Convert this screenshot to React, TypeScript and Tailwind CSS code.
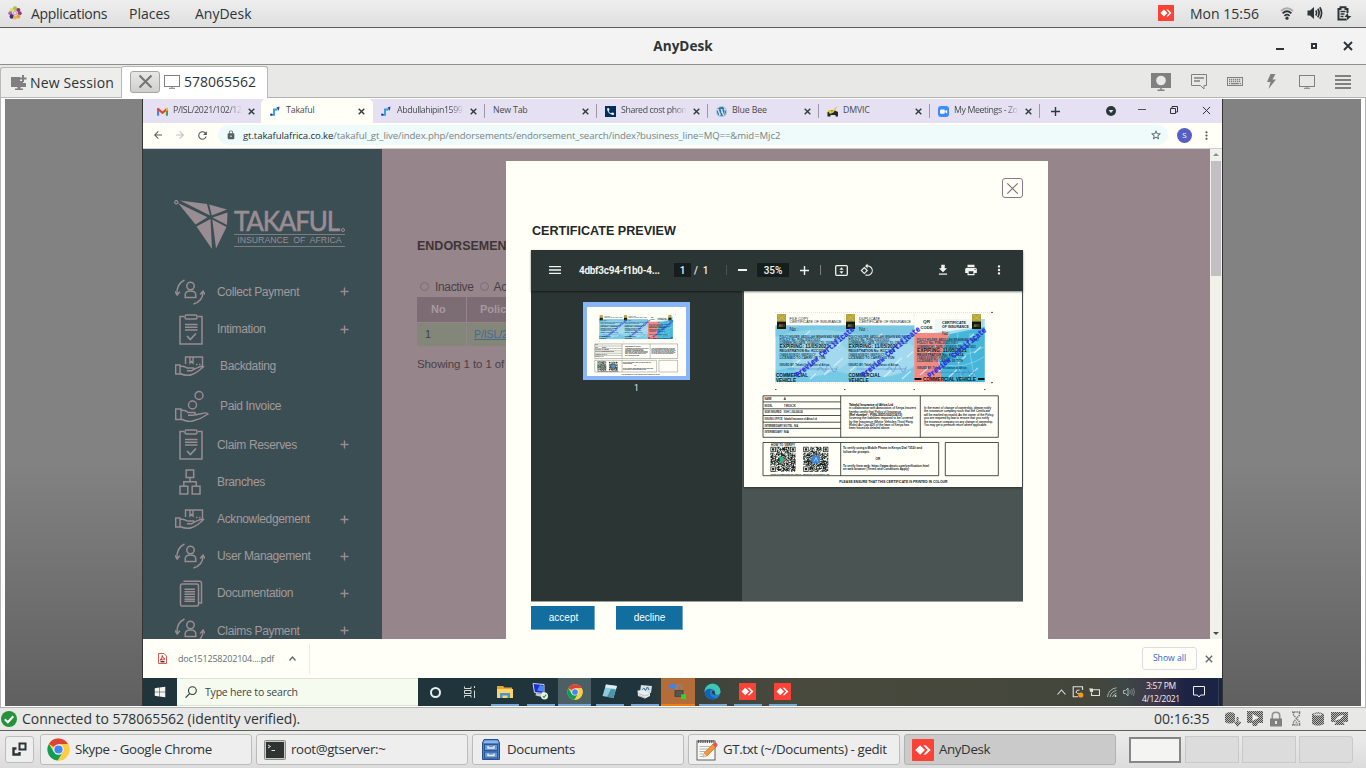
import React from "react";
import {
  MdArrowBack,
  MdArrowForward,
  MdRefresh,
  MdLock,
  MdStarBorder,
  MdMoreVert,
  MdMenu,
  MdFileDownload,
  MdPrint,
  MdRotate90DegreesCcw,
  MdPhone,
} from "react-icons/md";
import { FaWordpress, FaWindows } from "react-icons/fa";

const SYS = "font-['Open_Sans','Noto_Sans',sans-serif]";
const ARIAL = "font-['Liberation_Sans',Arial,sans-serif]";

type SvgProps = { w: number; h: number; box?: string; className?: string; children: React.ReactNode };
function Svg({ w, h, box, className, children }: SvgProps) {
  return (
    <svg width={w} height={h} viewBox={box ?? `0 0 ${w} ${h}`} className={`shrink-0 ${className ?? ""}`} fill="none">
      {children}
    </svg>
  );
}

function Cross({ size, stroke, sw = 1 }: { size: number; stroke: string; sw?: number }) {
  return (
    <Svg w={size} h={size} box="0 0 10 10">
      <path d="M1 1L9 9M9 1L1 9" stroke={stroke} strokeWidth={(sw * 10) / size} />
    </Svg>
  );
}

function AnyDeskLogo({ size }: { size: number }) {
  return (
    <Svg w={size} h={size} box="0 0 16 16">
      <rect width="16" height="16" rx="0.5" fill="#fb4236" />
      <path d="M2.4 8L5.9 4.5L9.4 8L5.9 11.5Z" fill="#fff" />
      <path d="M8.2 4.5H9.9L13.6 8L9.9 11.5H8.2L11.4 8Z" fill="#fff" />
    </Svg>
  );
}

function ChromeLogo({ size }: { size: number }) {
  return (
    <Svg w={size} h={size} box="0 0 24 24">
      <circle cx="12" cy="12" r="11.5" fill="#ffcd40" />
      <path d="M12 12L2 6.2A11.5 11.5 0 0 1 22 6.5H12Z" fill="#db4437" />
      <path d="M2 6.2A11.5 11.5 0 0 0 11.2 23.5L17 14.5L12 12L7.2 14.8Z" fill="#0f9d58" />
      <path d="M12 6.5H22A11.5 11.5 0 0 1 11.2 23.5L16.8 14.6Z" fill="#ffcd40" />
      <circle cx="12" cy="12" r="5.4" fill="#f6f6f6" />
      <circle cx="12" cy="12" r="4.3" fill="#4285f4" />
    </Svg>
  );
}

/* ---------- GNOME top panel ---------- */

function TopPanel() {
  return (
    <header className="flex h-7 shrink-0 items-center border-b border-[#5c5c5c] bg-linear-to-b from-[#eeeeee] to-[#dfdfdf] pb-px text-[14px] text-[#2e3436]">
      <Svg w={14} h={14} box="0 0 14 14" className="ml-2">
        <circle cx="7" cy="2.5" r="2.2" fill="#a4c83c" />
        <circle cx="3.6" cy="4" r="2" fill="#d9de6a" />
        <circle cx="10.4" cy="4" r="2" fill="#9b2d83" />
        <circle cx="2.3" cy="7.2" r="2" fill="#c25fa8" />
        <circle cx="11.7" cy="7.2" r="2" fill="#8a3a8d" />
        <circle cx="3.8" cy="10.5" r="2.2" fill="#3d2f86" />
        <circle cx="10.3" cy="10.4" r="2.1" fill="#e8a13a" />
        <circle cx="7" cy="11.6" r="2" fill="#f0b540" />
        <circle cx="7" cy="7" r="2.2" fill="#d9a0b8" />
        <circle cx="7" cy="7" r="1" fill="#f3e9ef" />
      </Svg>
      <span className="ml-[9px] w-[98px] tracking-[-0.3px]">Applications</span>
      <span className="w-[66px]">Places</span>
      <span>AnyDesk</span>
      <div className="ml-auto flex items-center pr-[14px]">
        <AnyDeskLogo size={16} />
        <span className="ml-4 w-[90px]">Mon 15:56</span>
        <Svg w={14} h={13} className="mr-[13px]">
          <path d="M1 4Q7-1.5 13 4" stroke="#a9acac" strokeWidth="1.8" />
          <path d="M2.6 6.4Q7 2.2 11.4 6.4" stroke="#2e3436" strokeWidth="1.8" />
          <path d="M4.4 8.8Q7 6.4 9.6 8.8" stroke="#2e3436" strokeWidth="1.6" />
          <circle cx="7" cy="11.2" r="1.6" fill="#2e3436" />
        </Svg>
        <Svg w={16} h={14} className="mr-[14px]">
          <path d="M0.5 4.5H3L7 1V13L3 9.5H0.5Z" fill="#2e3436" />
          <path d="M8.8 4.5Q10.4 7 8.8 9.5M10.8 2.8Q13.4 7 10.8 11.2M12.8 1.2Q16.4 7 12.8 12.8" stroke="#2e3436" strokeWidth="1.7" />
        </Svg>
        <Svg w={15} h={15}>
          <path d="M9 13.6H1.5V3H3.5V1.2H8.5V3H10.5V7" stroke="#2e3436" strokeWidth="2" />
          <path d="M3.5 5.5H8.5M3.5 8H7.5M3.5 10.5H6.5" stroke="#2e3436" strokeWidth="1.4" />
          <path d="M10.5 7L7.5 11H10L9 15L14.5 10H11.5Z" fill="#2e3436" />
        </Svg>
      </div>
    </header>
  );
}

function TitleBar() {
  return (
    <div className="grid h-[37px] shrink-0 grid-cols-[1fr_auto_1fr] items-center border-b border-[#8f8f8c] bg-[#f3f3f3]">
      <span />
      <h1 className="pt-px text-[13.6px] font-bold text-[#2e3436]">AnyDesk</h1>
      <div className="flex items-center justify-end pr-[13px]">
        <span className="mt-[5px] mr-[27px] h-[2px] w-2 bg-[#2e3436]" />
        <span className="mr-[26px] h-[6px] w-[6px] border-2 border-[#2e3436]" />
        <Cross size={10} stroke="#2e3436" sw={2} />
      </div>
    </div>
  );
}

function SessionTabs() {
  return (
    <div className="flex h-[33px] shrink-0 items-end bg-[#e8e8e6] shadow-[inset_0_-1px_0_#b4b4b2]">
      <div className="flex h-[31px] w-[121px] items-center rounded-tl-[3px] border border-r-0 border-[#b8b8b6] bg-[#ededeb] pl-[10px] text-[14px] text-[#2e3436]">
        <Svg w={17} h={16}>
          <path d="M0 2H9V6H12V8H15V12H9.5V13.5H12V15H4V13.5H6.5V12H0Z" fill="#808080" />
          <path d="M12 0V7M8.7 3.5H15.5" stroke="#808080" strokeWidth="2" />
        </Svg>
        <span className="ml-[2px] tracking-[0.15px] whitespace-nowrap">New Session</span>
      </div>
      <div className="flex h-[32px] w-[147px] items-center rounded-t-[3px] border border-b-0 border-[#b8b8b6] bg-white pb-[2px] text-[14px] text-[#2e3436]">
        <span className="ml-[8px] flex h-[22px] w-[30px] items-center justify-center rounded-[3px] border border-[#a5a5a3] bg-linear-to-b from-[#e8e8e6] to-[#cfcfcd]">
          <Cross size={15} stroke="#747474" sw={2} />
        </span>
        <Svg w={16} h={14} className="ml-1">
          <rect x="0.5" y="0.5" width="15" height="11" stroke="#808080" />
          <path d="M8 11V13M5 13.3H11" stroke="#808080" />
        </Svg>
        <span className="ml-1">578065562</span>
      </div>
      <div className="ml-auto flex h-full items-center pr-[15px]">
        <Svg w={20} h={18} className="mr-5">
          <path d="M0 0H20V15H0Z" fill="#808080" />
          <circle cx="10" cy="7.5" r="4.8" fill="#e8e8e6" />
          <path d="M10 15V17M6.5 17.3H13.5" stroke="#808080" strokeWidth="1.4" />
        </Svg>
        <Svg w={16} h={16} className="mr-5">
          <path d="M0.5 0.5H15.5V11.5H13V15L9.5 11.5H0.5Z" stroke="#808080" />
          <path d="M3 4H13M3 7H9" stroke="#808080" strokeWidth="1.4" />
        </Svg>
        <Svg w={16} h={9} className="mr-[24px]">
          <rect x="0.5" y="0.5" width="15" height="8" stroke="#808080" />
          <path d="M2 2.5H14M2 4.5H14" stroke="#808080" strokeWidth="1.3" strokeDasharray="1.3 .7" />
          <path d="M2 6.7H14" stroke="#808080" strokeWidth="1.3" strokeDasharray="1.3 .7 8 .7" />
        </Svg>
        <Svg w={9} h={15} className="mr-[23px]">
          <path d="M3.5 0L0 8H3.5L1.5 15L9 5.5H5.5L8.5 0Z" fill="#808080" />
        </Svg>
        <Svg w={16} h={14} className="mr-5">
          <rect x="0.5" y="0.5" width="15" height="11" stroke="#808080" />
          <path d="M8 11V13M5 13.3H11" stroke="#808080" />
        </Svg>
        <Svg w={16} h={14}>
          <path d="M0 1H16M0 5H16M0 9H16M0 13H16" stroke="#808080" strokeWidth="2" />
        </Svg>
      </div>
    </div>
  );
}

/* ---------- Remote browser ---------- */

function GmailIcon() {
  return (
    <Svg w={11} h={9} box="0 0 22 17">
      <path d="M2 17V2" stroke="#4285f4" strokeWidth="4.5" />
      <path d="M20 17V2" stroke="#34a853" strokeWidth="4.5" />
      <path d="M1 2.5L11 11L21 2.5" stroke="#ea4335" strokeWidth="4.5" />
      <path d="M18 5V1.5L22 1V6L18 8Z" fill="#fbbc04" />
    </Svg>
  );
}

function StepIcon() {
  return (
    <Svg w={10} h={10}>
      <path d="M0.5 8.8H4V3.5H7.5" stroke="#2e9ad6" strokeWidth="1.8" />
      <circle cx="1.3" cy="8.6" r="1.2" fill="#2a39c9" />
      <path d="M6.5 1.5L9.5 0.5L8.8 4.8Z" fill="#2a39c9" />
    </Svg>
  );
}

function CarIcon() {
  return (
    <Svg w={12} h={11}>
      <path d="M0.5 6L3 4.5L8 4.5L11 6V10.5H8.5V9H3.5V10.5H0.5Z" fill="#20262c" />
      <path d="M0.5 4.5L3.5 4L5 5.5L8.5 1.5L11 0L6.5 6.5L3 8Z" fill="#d9cf2c" />
    </Svg>
  );
}

const tabs = [
  { w: "w-[112px]", icon: <GmailIcon />, title: "P/ISL/2021/102/12", fade: true },
  { w: "w-[112px]", icon: <StepIcon />, title: "Takaful", active: true },
  { w: "w-[112px]", icon: <StepIcon />, title: "Abdullahipin1599", fade: true, sep: true },
  { w: "w-[112px]", icon: null, title: "New Tab", sep: true },
  {
    w: "w-[111px]",
    icon: (
      <span className="flex h-[11px] w-[11px] items-center justify-center bg-[#042e5e]">
        <MdPhone size={9} color="#fff" />
      </span>
    ),
    title: "Shared cost phon",
    fade: true,
    sep: true,
  },
  { w: "w-[111px]", icon: <FaWordpress size={11} color="#1f7ba0" />, title: "Blue Bee", sep: true },
  { w: "w-[111px]", icon: <CarIcon />, title: "DMVIC", sep: true },
  {
    w: "w-[110px]",
    icon: (
      <Svg w={11} h={11}>
        <rect width="11" height="11" rx="3" fill="#3d8bfd" />
        <rect x="2" y="3.5" width="4.8" height="4.2" rx="1" fill="#fff" />
        <path d="M7.2 5L9.2 3.8V7.4L7.2 6.2Z" fill="#fff" />
      </Svg>
    ),
    title: "My Meetings - Zo",
    fade: true,
    sep: true,
  },
];

function TabStrip() {
  return (
    <div className="flex h-[24px] shrink-0 items-stretch bg-[#e6e1f2] pl-[6px] text-[8.8px] tracking-[-0.02em] text-[#454b4d]">
      {tabs.map((t) => (
        <div
          key={t.title}
          className={`flex items-center ${t.w} ${t.active ? "rounded-t-[5px] bg-[#fffff8] pl-[9px]" : "pl-2"}`}
        >
          {t.icon && <span className="mr-[5px] flex w-[11px] shrink-0">{t.icon}</span>}
          <span
            className={`flex-1 whitespace-nowrap ${
              t.fade ? "tracking-[-0.045em] [mask-image:linear-gradient(to_right,#000_80%,transparent)]" : ""
            }`}
          >
            {t.title}
          </span>
          <span className="mr-[7px] ml-[6px] flex">
            <Cross size={7} stroke="#2f3a3c" sw={1.4} />
          </span>
          <span className={`h-[14px] w-px ${t.sep ? "bg-[#9d99aa]" : ""}`} />
        </div>
      ))}
      <div className="flex flex-1 items-center">
        <Svg w={9} h={9} className="ml-[11px]">
          <path d="M4.5 0V9M0 4.5H9" stroke="#27393a" strokeWidth="1.4" />
        </Svg>
        <Svg w={10} h={10} className="ml-[46px]">
          <circle cx="5" cy="5" r="5" fill="#263a38" />
          <path d="M2.6 4H7.4L5 7Z" fill="#e6e1f2" />
        </Svg>
        <span className="mt-[-4px] ml-[22px] h-px w-2 bg-[#555]" />
        <Svg w={8} h={8} className="mt-[-2px] ml-[24px]">
          <path d="M0.5 2.5H5.5V7.5H0.5ZM2 2V0.5H7.5V6H6" stroke="#333" />
        </Svg>
        <span className="mt-[-2px] ml-[24px] flex">
          <Cross size={9} stroke="#333" sw={1} />
        </span>
      </div>
    </div>
  );
}

function AddressBar() {
  return (
    <div className="flex h-[26px] shrink-0 items-center border-b border-[#cfcbd8] bg-[#fffff8] pb-px">
      <MdArrowBack size={12} color="#4f5a5a" className="ml-[9px]" />
      <MdArrowForward size={12} color="#b9bfbd" className="ml-[10px]" />
      <MdRefresh size={13} color="#4f5a5a" className="ml-[10px]" />
      <div className="ml-[9px] flex h-[20px] w-[950px] items-center rounded-full bg-[#effafa] pl-2">
        <MdLock size={10} color="#566060" />
        <span className="mt-[2px] ml-[7px] text-[9.6px] tracking-[-0.01em] text-[#7b8283]">
          <span className="text-[#263032]">gt.takafulafrica.co.ke</span>
          /takaful_gt_live/index.php/endorsements/endorsement_search/index?business_line=MQ==&amp;mid=Mjc2
        </span>
        <MdStarBorder size={12} color="#4f5a5a" className="mr-[6px] ml-auto" />
      </div>
      <span className="ml-[9px] flex h-[15px] w-[15px] items-center justify-center rounded-full bg-[#5560c4] text-[8px] text-white">
        S
      </span>
      <MdMoreVert size={13} color="#4f5a5a" className="ml-[8px]" />
    </div>
  );
}

/* ---------- Sidebar ---------- */

const LINE = "#998c93";

function UserCycle() {
  return (
    <Svg w={30} h={26} className="ml-px">
      <g stroke={LINE} strokeWidth="1.5">
        <circle cx="15.5" cy="7" r="3.7" />
        <path d="M10.2 18.5V16Q10.2 12 15.5 12Q20.8 12 20.8 16V18.5Z" />
        <path d="M9.5 1Q1.5 5 2 15M18.5 25Q28 22 28 13" />
        <path d="M0 12.5L2.2 16L4.8 12.8M25.3 15.5L28 12L30 15.5" />
      </g>
    </Svg>
  );
}

function Clipboard() {
  return (
    <Svg w={24} h={31} className="ml-[5px]">
      <g stroke={LINE} strokeWidth="1.5">
        <path d="M5 2.5H1V30H23V2.5H19" />
        <rect x="6" y="1" width="12" height="4" rx="1.5" />
        <path d="M6 10.5H18.5M6 13.3H18.5M6 16H18.5" strokeWidth="1.6" />
        <path d="M8 22L11.3 25.5L17 19.5" strokeWidth="1.8" />
      </g>
    </Svg>
  );
}

function BoxHand() {
  return (
    <Svg w={30} h={20} className="ml-px">
      <g stroke={LINE} strokeWidth="1.4">
        <path d="M10.5 8V1H27.5V12" />
        <path d="M15 1V7L16.5 5.5L18 7V1M21 8.5H22.5M24 8.5H25.5" />
        <path d="M0.7 9H5V18H0.7ZM5 10.5Q9 9.5 12 12H18.5Q19 14.5 16.5 14.7H12M5 17.5Q12 20.5 17 18.5Q22 17 28.5 10.5Q26 9.5 22 12L18.5 13.5" />
      </g>
    </Svg>
  );
}

function CoinHand() {
  return (
    <Svg w={34} h={32} className="ml-px mr-[-4px]">
      <g stroke={LINE} strokeWidth="1.4">
        <circle cx="24" cy="5.5" r="4" />
        <circle cx="17.5" cy="15" r="4" />
        <path d="M0.7 19H6V29.5H0.7ZM6 20.5Q10 19.5 13 22.5H20Q21 25 18 25.3H13M6 29Q14 33 19 30.5Q26 29 33 24Q31 22 27 23.5L20 25" />
      </g>
    </Svg>
  );
}

function OrgChart() {
  return (
    <Svg w={22} h={26} className="ml-[5px]">
      <g stroke={LINE} strokeWidth="1.5">
        <rect x="7.2" y="1" width="7.5" height="7.5" />
        <rect x="1" y="17.2" width="7.8" height="7.8" />
        <rect x="13.2" y="17.2" width="7.8" height="7.8" />
        <path d="M11 8.5V12.5M4.8 17V12.8H17.2V17" />
      </g>
    </Svg>
  );
}

function Docs() {
  return (
    <Svg w={24} h={27} className="ml-[5px]">
      <g stroke={LINE} strokeWidth="1.5">
        <rect x="1.5" y="4" width="18" height="22" rx="1.5" />
        <path d="M4.5 1.2H21Q22.5 1.2 22.5 3V23H20" />
        <path d="M5.5 9.2H16M5.5 11.7H16M5.5 14.2H16M5.5 16.7H16M5.5 19.2H16M5.5 21.3H16" strokeWidth="1.4" />
      </g>
    </Svg>
  );
}

const menu = [
  { label: "Collect Payment", icon: <UserCycle />, plus: true },
  { label: "Intimation", icon: <Clipboard />, plus: true },
  { label: "Backdating", icon: <BoxHand />, indent: true },
  { label: "Paid Invoice", icon: <CoinHand />, indent: true, gap: true },
  { label: "Claim Reserves", icon: <Clipboard />, plus: true, gap: true },
  { label: "Branches", icon: <OrgChart /> },
  { label: "Acknowledgement", icon: <BoxHand />, plus: true },
  { label: "User Management", icon: <UserCycle />, plus: true },
  { label: "Documentation", icon: <Docs />, plus: true },
  { label: "Claims Payment", icon: <UserCycle />, plus: true },
];

function Sidebar() {
  return (
    <aside className="h-full w-[239px] shrink-0 overflow-hidden bg-[#3b4e53] pt-[51px] pl-[31px]">
      <div className="flex h-[73.4px] items-start">
        <Svg w={54} h={50}>
          <g fill={LINE}>
            <path d="M6 0.5L33 4L36 15.5ZM4 3L33.5 17.2L21.5 24.5ZM35.2 4.5L53 9.5L37.8 15.5ZM38.5 17.5L53.5 12.5L53 25ZM22.5 26.5L36.5 19L38 49ZM38.3 19.5L52.5 27L42 48.5Z" />
          </g>
          <circle cx="2.3" cy="2.3" r="1.6" stroke={LINE} strokeWidth="1.2" />
        </Svg>
        <div className="mt-[9px] ml-[6px] flex w-[114px] flex-col text-[#998c93]">
          <span className="flex h-[24px] items-center text-[26px] tracking-[-0.045em] font-['Lato',sans-serif] [-webkit-text-stroke:0.6px_#998c93]">
            TAKAFUL
            <span className="mt-[17px] ml-[2px] h-1 w-1 shrink-0 rounded-full border border-[#998c93]" />
          </span>
          <span className={`mt-px flex h-[13px] w-[111px] items-center justify-center border-y border-[#7f7b83] text-[8.7px] whitespace-nowrap ${ARIAL}`}>
            INSURANCE&nbsp; OF&nbsp; AFRICA
          </span>
        </div>
      </div>
      <nav className={`flex flex-col text-[12px] tracking-[-0.35px] text-[#a39a9c] ${ARIAL}`}>
        {menu.map((m) => (
          <div key={m.label} className={`flex h-[37.2px] shrink-0 items-center ${m.gap ? "mt-[2px]" : ""}`}>
            <span className="flex w-[43px] shrink-0">{m.icon}</span>
            <span className={`w-[121px] ${m.indent ? "pl-[3px]" : ""}`}>{m.label}</span>
            {m.plus && (
              <Svg w={9} h={9} className="ml-[2px]">
                <path d="M4.5 0.5V8.5M0.5 4.5H8.5" stroke={LINE} strokeWidth="1.4" />
              </Svg>
            )}
          </div>
        ))}
      </nav>
    </aside>
  );
}

function PageBody() {
  return (
    <main className={`h-full flex-1 bg-[#96868c] pt-[89px] pl-[35px] text-[12px] text-[#4a4044] ${ARIAL}`}>
      <h2 className="h-[17px] text-[12.5px] leading-[17px] font-bold whitespace-nowrap text-[#3e3438]">ENDORSEMENTS SEARCH</h2>
      <div className="mt-[23px] flex h-[17px] items-center tracking-[-0.35px]">
        <span className="ml-[3px] h-[9px] w-[9px] rounded-full border border-[#7b6d73]" />
        <span className="ml-[6px]">Inactive</span>
        <span className="ml-[6px] h-[9px] w-[9px] rounded-full border border-[#7b6d73]" />
        <span className="ml-[5px]">Active</span>
      </div>
      <div className="mt-[2px] flex h-[25px] w-[400px] items-center gap-px">
        <span className="flex h-full w-[49px] items-center bg-[#7c6c73] pl-[14px] text-[11px] font-bold text-[#a8999f]">No</span>
        <span className="flex h-full flex-1 items-center bg-[#7c6c73] pl-[13px] text-[11px] font-bold text-[#a8999f]">Policy No</span>
      </div>
      <div className="mt-[1px] flex h-[23px] w-[400px] items-center gap-px">
        <span className="flex h-full w-[49px] items-center bg-[#83877a] pl-[8px] text-[11px]">1</span>
        <span className="flex h-full flex-1 items-center bg-[#83877a] pl-[7px] text-[10.5px] tracking-[-0.1px] text-[#46678f] underline">P/ISL/2021/102/12</span>
      </div>
      <p className="mt-[10px] text-[11.5px] tracking-[-0.1px]">Showing 1 to 1 of 1 entries</p>
    </main>
  );
}

/* ---------- Certificate document ---------- */

function Txt(props: React.SVGProps<SVGTextElement>) {
  return <text lengthAdjust="spacingAndGlyphs" {...props} />;
}

function Qr({ x, y, size, seed }: { x: number; y: number; size: number; seed: number }) {
  const n = 33;
  const c = size / n;
  let s = seed;
  let d = "";
  for (let j = 0; j < n; j++) {
    for (let i = 0; i < n; i++) {
      s ^= s << 13;
      s ^= s >>> 17;
      s ^= s << 5;
      const corner = (i < 8 && j < 8) || (i > 24 && j < 8) || (i < 8 && j > 24);
      if (!corner && (s >>> 0) / 4294967296 > 0.4) d += `M${x + i * c} ${y + j * c}h${c}v${c}h${-c}z`;
    }
  }
  const eyes = [
    [0, 0],
    [26, 0],
    [0, 26],
  ];
  return (
    <g>
      <path d={d} fill="#16201d" />
      {eyes.map(([i, j]) => (
        <g key={`${i}-${j}`}>
          <rect x={x + (i + 0.5) * c} y={y + (j + 0.5) * c} width={6 * c} height={6 * c} fill="none" stroke="#16201d" strokeWidth={c} />
          <rect x={x + (i + 2) * c} y={y + (j + 2) * c} width={3 * c} height={3 * c} fill="#16201d" />
        </g>
      ))}
    </g>
  );
}

function Aki({ x }: { x: number }) {
  return (
    <g>
      <rect x={x} y="23" width="9" height="7.5" fill="#b5a437" />
      <path d={`M${x + 1} 24l7 5.5M${x + 8} 24l-7 5.5`} stroke="#d8cc78" strokeWidth=".6" />
      <rect x={x} y="30.5" width="9" height="7.5" fill="#15180f" />
      <Txt x={x + 1.4} y="36" fontSize="4" fill="#a89a45" textLength="6.2">AKI</Txt>
    </g>
  );
}

function Fields({ x, y, w }: { x: number; y: number; w: number }) {
  return (
    <g fill="#10405a" fontSize="2.8" fontWeight="bold">
      <Txt x={x} y={y} textLength={w}>POLICY HOLDER: ABDULLAHI IBRAHIM AND FAMILY</Txt>
      <Txt x={x} y={y + 3} textLength={w * 0.66}>POLICY No: P/ISL/2021/102/1</Txt>
      <Txt x={x} y={y + 6.6} textLength={w * 0.95}>COMMENCING DATE: 12/04/2021 TO: 11/05/2021</Txt>
      <Txt x={x} y={y + 10.9} fontSize="4.7" fill="#0a1822" textLength={w * 0.8}>EXPIRING: 11/05/2021</Txt>
      <Txt x={x} y={y + 14.7} fontSize="3.5" fill="#0c2836" textLength={w * 0.75}>REGISTRATION No: KCC123A</Txt>
      <Txt x={x} y={y + 18} textLength={w * 0.58}>CHASIS NO/BODY: SEE/POLICY</Txt>
      <Txt x={x} y={y + 21.4} textLength={w * 0.74}>LICENSED TO CARRY: 05 TON</Txt>
      <Txt x={x} y={y + 28.3} textLength={w * 0.8}>ISSUED BY: Takaful Insurance of Africa</Txt>
      <path d={`M${x + 8} ${y + 31.5}h${w * 0.8}M${x + 38} ${y + 33}q3-6 5-1t4-2t5 1t6-2`} stroke="#4a7bc0" strokeWidth=".5" fill="none" />
    </g>
  );
}

const scratches = [
  [34, 88, 7], [40, 60, 9], [48, 76, 8], [57, 48, 9], [66, 88, 6], [72, 70, 8], [80, 84, 8], [90, 75, 9], [93, 55, 6],
  [106, 80, 8], [114, 62, 9], [122, 88, 8], [130, 50, 8], [140, 86, 8], [150, 74, 8], [158, 88, 9], [163, 66, 6],
  [176, 84, 8], [184, 62, 8], [193, 82, 7], [205, 86, 8], [214, 72, 8], [225, 85, 9], [230, 62, 7], [222, 50, 8],
];

function Certificate({ w, h }: { w: number; h: number }) {
  const ink = "#20262a";
  const left = [
    ["NAME", "A", 109.1],
    ["MODEL", "TRUCK", 115.8],
    ["SUM INSURED", "KSH 1,200,000.00", 122.4],
    ["ISSUING OFFICE", "Takaful Insurance of Africa Ltd", 129.1],
    ["INTERMEDIARY NO/TEL", "N/A", 135.6],
    ["INTERMEDIARY", "N/A", 142.2],
  ] as const;
  const leftLen = [7, 8, 17, 18, 28, 18];
  const valueLen = [2, 12, 19, 33, 4, 5];
  const body1 = [
    "Takaful Insurance of Africa Ltd",
    "in collaboration with Association of Kenya Insurers",
    "hereby certify that Policy of Insurance",
    "(Ref number : P/ISL/2021/102/13672)",
    "covering the liabilities required to be covered",
    "by the Insurance (Motor Vehicles Third Party",
    "Risks) Act Cap 405 of the laws of Kenya has",
    "been issued as detailed above.",
  ];
  const len1 = [44, 67, 52, 53, 64, 64, 60, 41];
  const body2 = [
    "In the event of change of ownership, please notify",
    "the insurance company such that the Certificate",
    "will be marked as invalid. As the owner of the Policy,",
    "you are required by law to ensure that you notify",
    "the insurance company on any change of ownership.",
    "You may get a premium return where applicable.",
  ];
  const len2 = [67, 66, 70, 65, 69, 63];
  return (
    <Svg w={w} h={h} box="0 0 278 196" className="block font-['Liberation_Sans',Arial,sans-serif]">
      <rect width="278" height="196" fill="#fffff8" />
      <path d="M31 21.5H248M31 92H248M100.4 21.5V92M170 21.5V92" stroke="#c5c9c4" strokeWidth=".5" strokeDasharray="1 1" />
      <path d="M247 21.4h2M247 91.6h2M31 98.5h1.5M100 98.5h1.5M169.5 98.5h1.5M240 98.5h1.5" stroke="#555" />
      <rect x="31.5" y="34.5" width="138.8" height="56.5" fill="#8ed3ea" />
      <path d="M31.5 34.5H170.3V42Q135 48 100 41T31.5 46Z" fill="#6fc2e0" opacity=".6" />
      <path d="M31.5 80Q60 70 100 82T170.3 76V91H31.5Z" fill="#6cc4e2" opacity=".7" />
      <path d="M46 50Q70 36 95 52T90 80T50 78ZM116 50Q140 36 165 52T160 80T120 78Z" fill="#b2dff2" opacity=".55" />
      <path d="M191 28H240.7V91H170.3V42H190Z" fill="#a6dcf0" />
      <path d="M170.3 42H203L206 47L194 70L200 91H170.3Z" fill="#f08a82" />
      <path d="M206 43L240.7 36V91H200Q190 72 206 43Z" fill="#45b5d8" />
      <path d="M190 22H228V37L190 42Z" fill="#fffff8" opacity=".8" />
      <g stroke="#dff4fb" strokeWidth="1.2" opacity=".8">
        {scratches.map(([x, y, l]) => (
          <path key={`${x}-${y}`} d={`M${x} ${y}l${l} ${-l * 0.9}`} />
        ))}
      </g>
      <path d="M206 52q12 4 30-8M204 62q16 6 36-6M202 74q18 4 38-8M214 42q-4 20 4 46M226 42q-2 22 6 48" stroke="#a6e1f1" strokeWidth=".7" opacity=".8" />
      <Aki x={33} />
      <Aki x={102} />
      <Aki x={228} />
      <g fill={ink} fontSize="3.9">
        <Txt x="45.5" y="29.2" textLength="19">FILE COPY</Txt>
        <Txt x="45.5" y="32.4" textLength="52">CERTIFICATE OF INSURANCE</Txt>
        <Txt x="115" y="29.2" textLength="21">DUPLICATE</Txt>
        <Txt x="115" y="32.4" textLength="52">CERTIFICATE OF INSURANCE</Txt>
        <g fontWeight="bold">
          <Txt x="179" y="32" fontSize="4.2" textLength="7">QR</Txt>
          <Txt x="176.5" y="37.6" fontSize="4.2" textLength="12">CODE</Txt>
          <Txt x="198" y="33" textLength="24">CERTIFICATE</Txt>
          <Txt x="198" y="36.7" textLength="27">OF INSURANCE</Txt>
        </g>
        <Txt x="45.5" y="40.4" fontSize="5">No :</Txt>
        <Txt x="115" y="40.4" fontSize="5">No :</Txt>
        <Txt x="198" y="44.3" fontSize="5">No:</Txt>
      </g>
      <Fields x={35.5} y={46.5} w={62} />
      <Fields x={104.5} y={46.5} w={62} />
      <Fields x={173} y={50} w={62} />
      <g fill="#091418" fontWeight="bold" fontSize="5.4">
        <Txt x="32" y="85.6" textLength="32">COMMERCIAL</Txt>
        <Txt x="32" y="90.7" textLength="20">VEHICLE</Txt>
        <Txt x="104.5" y="85.6" textLength="32">COMMERCIAL</Txt>
        <Txt x="104.5" y="90.7" textLength="20">VEHICLE</Txt>
        <Txt x="179" y="89.9" fontSize="5" textLength="53">COMMERCIAL VEHICLE</Txt>
      </g>
      <path d="M170.5 88h7M234 88h6.5" stroke="#091418" strokeWidth="2" />
      <g fill="#2a2be0" fontWeight="bold" fontSize="8" stroke="#2a2be0" strokeWidth=".25" className="font-['Liberation_Mono',monospace]">
        <Txt transform="translate(54 86.5) rotate(-40)" textLength="74">Preview Certificate</Txt>
        <Txt transform="translate(120 86.5) rotate(-40)" textLength="74">Preview Certificate</Txt>
        <Txt transform="translate(186 87.5) rotate(-40)" textLength="74">Preview Certificate</Txt>
      </g>
      <g stroke="#1d2422" strokeWidth=".8">
        <path d="M19 104.8H254.3V146.3H19ZM96.7 104.8V146.3M176.3 104.8V146.3M19 110.9H96.7M19 117.8H96.7M19 124.5H96.7M19 131.2H96.7M19 137.4H96.7" />
        <path d="M19 151.5H194.7V184.7H19ZM96.7 151.5V184.7M201.3 151.5H254.3V184.7H201.3Z" />
      </g>
      <g fill={ink} fontSize="2.9">
        {left.map(([a, b, y], i) => (
          <g key={a}>
            <Txt x="20.5" y={y} fontWeight="bold" textLength={leftLen[i]}>{a}</Txt>
            <Txt x={i === 4 ? 50 : 39.8} y={y} textLength={valueLen[i]} stroke={ink} strokeWidth=".1">{b}</Txt>
          </g>
        ))}
      </g>
      <g fill={ink} fontSize="3.3" stroke={ink} strokeWidth=".08">
        {body1.map((t, i) => (
          <Txt key={t} x="105" y={114.8 + i * 3.35} fontWeight={i === 0 || i === 3 ? "bold" : "normal"} textLength={len1[i]}>
            {t}
          </Txt>
        ))}
        {body2.map((t, i) => (
          <Txt key={t} x="180" y={118.1 + i * 3.35} textLength={len2[i]}>{t}</Txt>
        ))}
      </g>
      <g fill="#10181a" fontWeight="bold" fontSize="3.1">
        <Txt x="27" y="155.2" textLength="24">HOW TO VERIFY</Txt>
        <Txt x="26.5" y="183.8" fontSize="2.5" textLength="59">Scan to download the DMVIC, Motorist Verification App</Txt>
        <Txt x="99" y="158.4" textLength="79">To verify using a Mobile Phone in Kenya Dial *352# and</Txt>
        <Txt x="99" y="162" textLength="27">follow the prompts.</Txt>
        <Txt x="131.5" y="168.8">OR</Txt>
        <Txt x="99" y="175.6" textLength="86">To verify from web: https://www.dmvic.com/verification.html</Txt>
        <Txt x="99" y="179" textLength="66">on web browser (Terms and Conditions Apply)</Txt>
        <Txt x="95.3" y="192.4" textLength="108">PLEASE ENSURE THAT THIS CERTIFICATE IS PRINTED IN COLOUR</Txt>
      </g>
      <Qr x={26.5} y={155.8} size={25} seed={1779} />
      <Qr x={59.3} y={155.8} size={25} seed={9151} />
      <path d="M35.5 164.5L42.5 168.7L35.5 173Z" fill="#2fb68f" />
      <path d="M39.5 168.7L42.5 168.7L38 173Z" fill="#e24b55" />
      <rect x="68" y="164.5" width="8" height="8" rx="1" fill="#3e84d6" />
      <path d="M70.2 170.5L72 166.5L73.8 170.5" stroke="#cfe3fa" strokeWidth=".7" />
    </Svg>
  );
}

/* ---------- Modal with PDF viewer ---------- */

function PdfToolbar() {
  return (
    <div className="z-10 flex h-[41px] shrink-0 items-center bg-[#2a3534] pb-px font-['Roboto',sans-serif] text-[10px] font-medium text-[#f1f3ee] shadow-[0_1px_2px_rgba(0,0,0,0.5)]">
      <MdMenu size={16} className="ml-[16px]" />
      <span className="ml-4 w-[95px] font-bold tracking-[-0.03em]">4dbf3c94-f1b0-4...</span>
      <span className="flex h-[14px] w-[17px] items-center justify-center bg-[#151e1d]">1</span>
      <span className="ml-[3px] w-[17px] whitespace-pre">/  1</span>
      <span className="ml-[15px] h-[10px] w-px bg-[#4b5453]" />
      <span className="ml-[11px] h-[1.5px] w-[9px] bg-[#f1f3ee]" />
      <span className="ml-[10px] flex h-[14px] w-[32px] items-center justify-center bg-[#151e1d]">35%</span>
      <Svg w={9} h={9} className="ml-[11px]">
        <path d="M4.5 0V9M0 4.5H9" stroke="#f1f3ee" strokeWidth="1.4" />
      </Svg>
      <span className="ml-[11px] h-[10px] w-px bg-[#79807e]" />
      <Svg w={13} h={11} className="ml-[14px]">
        <rect x="0.7" y="0.7" width="11.6" height="9.6" rx="1" stroke="#f1f3ee" strokeWidth="1.3" />
        <path d="M6.5 2.3L8.6 4.7H4.4ZM6.5 8.7L8.6 6.3H4.4Z" fill="#f1f3ee" />
      </Svg>
      <MdRotate90DegreesCcw size={14} className="ml-[12px]" />
      <MdFileDownload size={14} className="ml-auto" />
      <MdPrint size={14} className="ml-[14px]" />
      <MdMoreVert size={14} className="mr-[17px] ml-[14px]" />
    </div>
  );
}

function Modal() {
  return (
    <section className={`absolute top-[12px] left-[363px] flex h-[479px] w-[542px] flex-col bg-[#fffff8] pl-[25px] ${ARIAL}`}>
      <button className="mt-[17px] mr-[25px] flex h-[20px] w-[21px] items-center justify-center self-end rounded-[3px] border border-[#8a7883]">
        <Cross size={13} stroke="#7b6873" sw={1.1} />
      </button>
      <h3 className="mt-[24px] ml-px h-[18px] text-[12.6px] leading-[18px] font-bold text-[#232827]">CERTIFICATE PREVIEW</h3>
      <div className="mt-[10px] flex h-[352px] w-[492px] shrink-0 flex-col border-b border-[#9aa09b]">
        <PdfToolbar />
        <div className="flex flex-1">
          <div className="flex w-[211px] flex-col items-center bg-[#2a3534] pt-[11px] font-['Roboto',sans-serif] text-[8.5px] text-[#e6e9e4]">
            <div className="box-border flex h-[78px] w-[107px] items-center justify-center bg-[#8ab4f8]">
              <div className="flex h-[69px] w-[99px] items-center justify-center bg-[#fffff8]">
                <Certificate w={98} h={69} />
              </div>
            </div>
            <span className="mt-[2px]">1</span>
          </div>
          <div className="flex-1 bg-[#4a5553] pl-[2px]">
            <div className="w-[278px] shadow-[0_1px_2px_#2a3330]">
              <Certificate w={278} h={196} />
            </div>
          </div>
        </div>
      </div>
      <div className="mt-[4px] flex gap-[21px] text-[10px] text-white">
        <button className="h-[24px] w-[64px] border-r border-b border-[#6fa8c6] bg-[#116e9f] pl-[2px]">accept</button>
        <button className="h-[24px] w-[67px] border-r border-b border-[#6fa8c6] bg-[#116e9f] pl-px">decline</button>
      </div>
    </section>
  );
}

function DownloadShelf() {
  return (
    <div className="flex h-[39px] shrink-0 items-center bg-[#fffff8] text-[9px]">
      <Svg w={9} h={11} className="ml-[15px]">
        <path d="M0.5 0.5H6L8.5 3V10.5H0.5Z" stroke="#d85a55" />
        <path d="M2 7Q4.5 5 4.3 2.5Q5 5.5 7 6Q4 6 2 7Z" stroke="#c43a35" strokeWidth="1" />
        <rect x="2.5" y="7.8" width="4" height="1.6" fill="#333" />
      </Svg>
      <span className="ml-[11px] w-[97px] tracking-[-0.2px] whitespace-nowrap text-[#656e70]">doc151258202104....pdf</span>
      <Svg w={7} h={5} className="ml-[14px]">
        <path d="M0.5 4.5L3.5 1L6.5 4.5" stroke="#5c6668" strokeWidth="1.2" />
      </Svg>
      <span className="ml-[13px] h-[30px] w-px bg-[#e6ecf4]" />
      <button className="ml-auto h-[23px] w-[55px] rounded-[3px] border border-[#dedbe9] pb-px text-[8.6px] text-[#2c68d2]">Show all</button>
      <span className="mr-[9px] ml-[8px] flex">
        <Cross size={8} stroke="#5b6667" sw={1.3} />
      </span>
    </div>
  );
}

/* ---------- Windows taskbar ---------- */

function TaskIcon({ w, children, line = "w-[28px] bg-[#76a9d8]", bg = "" }: { w: string; children: React.ReactNode; line?: string; bg?: string }) {
  return (
    <span className={`flex h-full flex-col items-center justify-end ${w} ${bg}`}>
      <span className="flex flex-1 items-center pt-[1px]">{children}</span>
      <span className={`h-[2px] ${line}`} />
    </span>
  );
}

function WindowsTaskbar() {
  return (
    <div className="flex h-[28px] shrink-0 items-center bg-[linear-gradient(to_right,#20343b_0%,#20343b_46%,#3c4139_51%,#494a3e_60%,#43463b_88%,#3d4746_91%,#3f3548_94%,#1e2443_96.5%,#1a2444_100%)]">
      <span className="flex w-[34px] justify-center">
        <FaWindows size={12} color="#f2f6f2" />
      </span>
      <div className="flex h-full w-[241px] items-center border-y border-[#dde3d6] bg-[#f6fbef] pl-[8px]">
        <Svg w={12} h={12}>
          <circle cx="7.4" cy="4.6" r="3.9" stroke="#2d3a38" strokeWidth="1.1" />
          <path d="M4.6 7.6L0.6 11.6" stroke="#2d3a38" strokeWidth="1.2" />
        </Svg>
        <span className="mt-px ml-[8px] text-[10.5px] tracking-[-0.2px] text-[#3a4543]">Type here to search</span>
      </div>
      <span className="flex w-[34px] justify-center">
        <span className="h-[11px] w-[11px] rounded-full border-2 border-[#e8efee]" />
      </span>
      <span className="flex w-[35px] justify-center">
        <Svg w={12} h={12}>
          <path d="M0.5 0.5V2.5H7V0.5M0.5 11.5V9.5H7V11.5M0.5 4.5H7V7.5H0.5ZM10.5 0V2M10.5 4.5V12" stroke="#d2dada" />
        </Svg>
      </span>
      <TaskIcon w="w-[36px]">
        <Svg w={16} h={13}>
          <path d="M0 1H6L7.5 2.5H15V6H0Z" fill="#e3a927" />
          <path d="M0 4H16V13H0Z" fill="#fbd46c" />
          <path d="M3 8H13V13H10.5V10.5H5.5V13H3Z" fill="#4b94cf" />
        </Svg>
      </TaskIcon>
      <TaskIcon w="w-[35px]">
        <Svg w={17} h={17}>
          <path d="M1 0.5L12 1.5L12 10.5L2.5 9.5Z" fill="#1b2fd0" stroke="#c9d3ea" />
          <path d="M8 2L11 3L11 8.5L5 7.5Z" fill="#4c86ff" />
          <path d="M4 10L10 11V14L3.5 12.5Z" fill="#c6cdcd" />
          <path d="M10 9L15 10V15L10 14.5Z" fill="#d9dedc" />
          <circle cx="12.5" cy="13" r="3.5" fill="#eaf2ea" />
          <path d="M10.8 13.2L12.1 14.3L14.2 11.7" stroke="#3b9b42" strokeWidth="1.2" />
        </Svg>
      </TaskIcon>
      <TaskIcon w="w-[33px]" bg="bg-[#4b5f65]" line="w-full bg-[#76a9d8]">
        <ChromeLogo size={16} />
      </TaskIcon>
      <TaskIcon w="w-[37px]">
        <Svg w={16} h={15}>
          <path d="M4 0.5L15 2L11.5 14L0.5 12Z" fill="#8fcbdc" />
          <path d="M4 0.5L15 2L14 5L3.2 3.5Z" fill="#d9eef2" />
          <path d="M9 5L13.5 5.5L11.3 14L5 12.7Z" fill="#4a93a8" />
        </Svg>
      </TaskIcon>
      <TaskIcon w="w-[33px]">
        <Svg w={16} h={15}>
          <path d="M4 1L15 2L14 9L3 8Z" fill="#d8dfe2" />
          <path d="M5 6L7 4L8.5 6.5L10.5 3L12 6" stroke="#4d83a8" />
          <path d="M0.5 6.5L6 6L13 9V12L8 14.5L1 12Z" fill="#e9edec" />
          <path d="M1.5 9.5L8 12L12 10.5M2 11.5L8 14" stroke="#a3aeb1" strokeWidth=".7" />
          <path d="M5 6L7 4L8.5 6.5L10.5 3L12 6" stroke="#4d83a8" />
        </Svg>
      </TaskIcon>
      <TaskIcon w="w-[34px]" bg="bg-[#b46d38]" line="w-full bg-[#f07e16]">
        <Svg w={17} h={17}>
          <path d="M0 1.5L2 1L5 0.5L6 2L5 5.5L0 6Z" fill="#3f83e6" />
          <path d="M6.2 8V5Q6.2 2 8.9 2Q11.7 2 11.7 5V8" stroke="#8a8479" strokeWidth="1.8" />
          <rect x="4.5" y="7" width="9" height="7" fill="#4a4843" />
          <path d="M7 8V13M9 8V13M11 8V13" stroke="#6d6962" strokeWidth=".8" />
          <path d="M11 11.5L16 11V16.5L11 16Z" fill="#2fd52f" />
        </Svg>
      </TaskIcon>
      <TaskIcon w="w-[35px]">
        <Svg w={17} h={17}>
          <circle cx="8.5" cy="8.5" r="8" fill="#1d7fd0" />
          <path d="M0.6 7.5A8 8 0 0 1 16.5 9Q16 12 12.5 11.8Q10 11.5 11 9.5Q11.5 6.5 8 6Q3 5.5 0.6 9Z" fill="#3fc6b0" />
          <path d="M6 8Q5 14 12 15.5Q6 17.5 2.5 13.5Q0 10 2 7Q4 5 8 6Q6.2 6.8 6 8Z" fill="#1163b5" />
          <path d="M8 8.2Q7.3 12 12.5 12Q10.5 11.5 11 9.5Q10.5 7 8 8.2Z" fill="#333c38" />
        </Svg>
      </TaskIcon>
      <TaskIcon w="w-[35px]">
        <AnyDeskLogo size={17} />
      </TaskIcon>
      <TaskIcon w="w-[35px]">
        <AnyDeskLogo size={17} />
      </TaskIcon>
      <div className="ml-auto flex h-full items-center">
        <Svg w={9} h={6} className="mr-[6px]">
          <path d="M0.5 5.5L4.5 1L8.5 5.5" stroke="#e0e3dc" strokeWidth="1.1" />
        </Svg>
        <Svg w={12} h={12} className="mr-[5px]">
          <path d="M10.5 4V0.8H1.2V10.8H6" stroke="#e0e3dc" strokeWidth="1.1" />
          <path d="M4 6.5Q4 3.5 7.5 4M4 6Q5 8 7 7.5" stroke="#e0e3dc" />
          <circle cx="8.8" cy="9" r="2.6" fill="#f79a1a" />
        </Svg>
        <Svg w={11} h={9} className="mr-[7px]">
          <path d="M4 1.8H10.5V7.5H2.5V4.5" stroke="#e0e3dc" strokeWidth="1.1" />
          <path d="M0 0.5H4V4H1.5Z" fill="#e0e3dc" />
        </Svg>
        <Svg w={10} h={10} className="mr-[6px]">
          <path d="M0.5 10Q1.5 2 9.5 0.8M3 10Q4 4.5 9.5 3.5M5.5 10Q6.3 7 9.5 6.2" stroke="#aeb3a8" strokeWidth="1" />
          <circle cx="8.5" cy="9" r="1" fill="#e0e3dc" />
        </Svg>
        <Svg w={12} h={10} className="mr-[6px]">
          <path d="M0.5 3.5H2.5L5 1V9L2.5 6.5H0.5Z" stroke="#b7c3c3" strokeWidth=".9" />
          <path d="M6.8 3Q7.8 5 6.8 7M8.5 2Q10.3 5 8.5 8M10.3 1Q12.6 5 10.3 9" stroke="#87979b" strokeWidth=".8" />
        </Svg>
        <div className="w-[40px] text-center text-[8.5px] leading-[13px] tracking-[-0.03em] text-[#f0f0f4]">
          <div>3:57 PM</div>
          <div>4/12/2021</div>
        </div>
        <Svg w={12} h={12} className="mr-[13px] ml-[12px]">
          <path d="M0.5 0.5H11.5V9H7.7L6 11L4.3 9H0.5Z" stroke="#eceef4" />
        </Svg>
        <span className="mr-[3px] h-full w-px bg-[#343c58]" />
      </div>
    </div>
  );
}

function RemoteDesktop() {
  return (
    <div className="flex h-[607px] w-[1081px] flex-col overflow-hidden border-x border-[#333]">
      <TabStrip />
      <AddressBar />
      <div className="relative flex h-[490px] shrink-0">
        <Sidebar />
        <PageBody />
        <div className="flex w-[12px] flex-col items-center justify-between bg-[#f1f1ec] py-[4px]">
          <Svg w={6} h={3}>
            <path d="M0 3H6L3 0Z" fill="#8b8f8c" />
          </Svg>
          <span className="mt-[5px] mb-auto h-[115px] w-[10px] bg-[#c3c0c4]" />
          <Svg w={6} h={3}>
            <path d="M0 0H6L3 3Z" fill="#444a48" />
          </Svg>
        </div>
        <Modal />
      </div>
      <DownloadShelf />
      <WindowsTaskbar />
    </div>
  );
}

/* ---------- AnyDesk status bar and GNOME window list ---------- */

function StatusBar() {
  return (
    <div className="flex h-[24px] shrink-0 items-center border-t border-b border-t-[#b4b4b2] border-b-[#5f5f5e] bg-[#e8e8e6] pb-px text-[14px] text-[#2e3436]">
      <Svg w={16} h={16} className="ml-px">
        <circle cx="8" cy="8" r="8" fill="#26933c" />
        <path d="M3.8 8.3L6.8 11.2L12.3 5.2" stroke="#fff" strokeWidth="2" />
      </Svg>
      <span className="ml-[5px] tracking-[-0.05px]">Connected to 578065562 (identity verified).</span>
      <span className="ml-auto w-[71px]">00:16:35</span>
      <Svg w={16} h={16} className="mr-[6px]">
        <defs>
          <pattern id="dither" width="2" height="2" patternUnits="userSpaceOnUse">
            <rect width="2" height="2" fill="#b9b9b7" />
            <rect width="1" height="1" fill="#4c4c4c" />
            <rect x="1" y="1" width="1" height="1" fill="#4c4c4c" />
          </pattern>
        </defs>
        <path d="M0 3Q5-1 10 3V11Q5 14 0 11Z" fill="url(#dither)" />
        <path d="M12.5 6V13M10 11L12.5 14.5L15.5 11" stroke="url(#dither)" strokeWidth="2" />
      </Svg>
      <Svg w={16} h={15} className="mr-[7px]">
        <path d="M0 0H16V12H11L10 15H6L5 12H0Z" fill="url(#dither)" />
        <path d="M5.5 3L12 6.5L5.5 10Z" fill="#f0f0ee" />
      </Svg>
      <Svg w={12} h={16} className="mr-[10px]">
        <path d="M2.3 8V4.5Q2.3 1.2 6 1.2Q9.7 1.2 9.7 4.5V8" stroke="#8f8f8f" strokeWidth="1.6" />
        <rect y="7.5" width="12" height="8" fill="#808080" />
        <rect x="5" y="10" width="2" height="3" fill="#e8e8e6" />
      </Svg>
      <Svg w={9} h={15} className="mr-[11px]">
        <path d="M0 1H9M0 14H9M1.5 1V4L4.5 7.5L7.5 4V1M1.5 14V11L4.5 7.5L7.5 11V14" stroke="#777" strokeWidth="1.4" strokeDasharray="1.4 .8" />
        <path d="M3 12.5L4.5 10L6 12.5Z" fill="#999" />
      </Svg>
      <Svg w={12} h={14} className="mr-[7px]">
        <path d="M0 2Q6-1.5 12 2V12Q6 15.5 0 12Z" fill="url(#dither)" />
        <ellipse cx="6" cy="2.5" rx="4" ry="1" fill="#ddd" />
      </Svg>
      <Svg w={17} h={14} className="mr-[18px]">
        <path d="M0 0H17V10H12L14 13H3L5 10H0Z" fill="url(#dither)" />
        <path d="M3 9Q8 2 13 3L9 7Z" fill="#f0f0ee" />
      </Svg>
    </div>
  );
}

function WinButton({ icon, label, active }: { icon: React.ReactNode; label: string; active?: boolean }) {
  return (
    <div
      className={`mr-1 flex h-[31px] w-[212px] shrink-0 items-center rounded-[3px] border pl-[6px] text-[13.3px] tracking-[-0.37px] text-[#2e3436] ${
        active ? "border-[#b2b2b2] bg-[#cacaca]" : "border-[#bcbcba] bg-[#eeeeee]"
      }`}
    >
      <span className="mr-[5px] flex w-[23px] justify-center">{icon}</span>
      <span className="whitespace-nowrap">{label}</span>
    </div>
  );
}

function WindowList() {
  return (
    <footer className="flex h-[37px] shrink-0 items-center bg-linear-to-b from-[#ececec] to-[#dcdcdc]">
      <div className="mr-[6px] ml-[5px] flex h-[27px] w-[29px] items-center justify-center rounded-[3px] border border-[#bcbcba] bg-[#eeeeee]">
        <Svg w={15} h={15}>
          <rect x="7.5" y="1.5" width="6" height="6" stroke="#2e3436" strokeWidth="2" />
          <path d="M4.5 6.5H1.5V12.5H7.5V10" stroke="#2e3436" strokeWidth="2.4" />
        </Svg>
      </div>
      <WinButton icon={<ChromeLogo size={23} />} label="Skype - Google Chrome" />
      <WinButton
        label="root@gtserver:~"
        icon={
          <Svg w={22} h={20}>
            <rect x="0.5" y="0.5" width="21" height="19" rx="1" fill="#c9c9c5" stroke="#8b8b88" />
            <rect x="2" y="2" width="18" height="16" fill="#2f3433" />
            <path d="M4 5L6.5 6.5L4 8" stroke="#e8e8e8" />
            <path d="M7.5 10.5H11" stroke="#e8e8e8" />
          </Svg>
        }
      />
      <WinButton
        label="Documents"
        icon={
          <Svg w={18} h={21}>
            <path d="M2 0.5H16L17.5 4V20.5H0.5V4Z" fill="#4a7fc6" stroke="#27508f" />
            <path d="M2.5 1.5H15.5L16.5 4H1.5Z" fill="#8fb5e6" />
            <rect x="2.5" y="5.5" width="13" height="6" fill="#6397d8" stroke="#2c5696" />
            <rect x="2.5" y="13" width="13" height="6" fill="#6397d8" stroke="#2c5696" />
            <path d="M6 7V9H12V7M6 14.5V16.5H12V14.5" stroke="#f1ead8" strokeWidth="1.4" />
          </Svg>
        }
      />
      <WinButton
        label="GT.txt (~/Documents) - gedit"
        icon={
          <Svg w={22} h={22}>
            <rect x="1" y="2" width="18" height="19" fill="#f7f7f4" stroke="#5e5e5c" />
            <path d="M2 2.5H18" stroke="#555" strokeWidth="3" strokeDasharray="1.2 1" />
            <path d="M3.5 7.5H14M3.5 10H12M3.5 12.5H9M3.5 15H7M3.5 17.5H8" stroke="#b4b4b2" />
            <path d="M7 18L8.5 13.5L17.5 4.5L20.5 7.5L11.5 16.5Z" fill="#f0963a" stroke="#b5651c" strokeWidth=".6" />
            <path d="M16.5 5.5L18.5 3.5Q21 3 21.8 6L19.5 8.5Z" fill="#e0555a" />
            <path d="M7 18L8.2 14.5L10.5 16.9Z" fill="#f3dcb8" />
          </Svg>
        }
      />
      <WinButton active label="AnyDesk" icon={<AnyDeskLogo size={22} />} />
      <div className="ml-[9px] flex items-center gap-[3px]">
        <span className="mr-px h-[26px] w-[52px] border-2 border-[#868686] bg-[#f4f4f3]" />
        <span className="h-[27px] w-[54px] border border-[#c9c9c9] bg-[#dcdcdc]" />
        <span className="h-[27px] w-[54px] border border-[#c9c9c9] bg-[#dcdcdc]" />
        <span className="h-[27px] w-[54px] rounded-r-[3px] border border-[#c9c9c9] bg-[#dcdcdc]" />
      </div>
    </footer>
  );
}

export default function App() {
  return (
    <div className={`flex h-[768px] w-[1366px] flex-col overflow-hidden ${SYS}`}>
      <TopPanel />
      <TitleBar />
      <SessionTabs />
      <div className="h-[609px] shrink-0 border-x border-[#b4b4b2] bg-white px-[4px] pt-px pb-px">
        <div className="flex h-full justify-start bg-linear-to-b from-[#828282] from-60% to-[#606060] pl-[137px]">
          <RemoteDesktop />
        </div>
      </div>
      <StatusBar />
      <WindowList />
    </div>
  );
}
